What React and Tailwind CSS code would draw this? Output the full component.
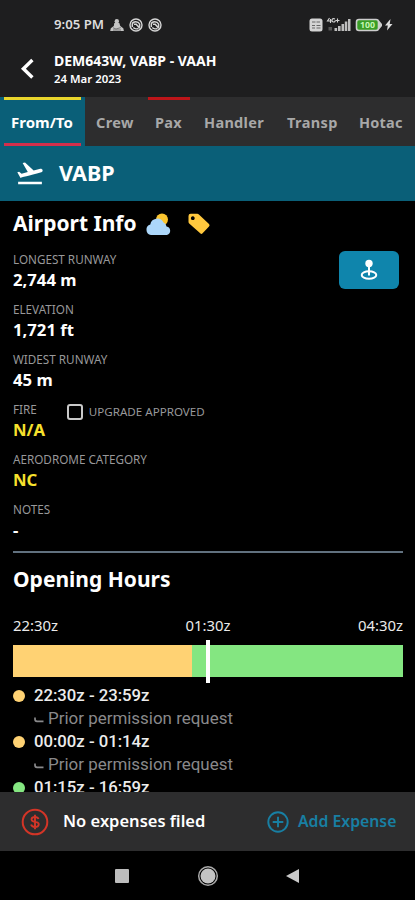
import { MdFlightTakeoff } from "react-icons/md";

const fields = [
  { label: "LONGEST RUNWAY", value: "2,744 m" },
  { label: "ELEVATION", value: "1,721 ft" },
  { label: "WIDEST RUNWAY", value: "45 m" },
];

function Field({ label, value, yellow, children }) {
  return (
    <div className="h-[50px]">
      <div className="flex h-[18px] items-center">
        <span className="whitespace-nowrap text-[11.700px] leading-[18px] text-[#98989a]">{label}</span>
        {children}
      </div>
      <div className={`text-[16.700px] font-bold leading-[23px] ${yellow ? "text-[#f7e12d]" : "text-white"}`}>{value}</div>
    </div>
  );
}

function SpiralIcon() {
  return (
    <svg width="14" height="14" viewBox="0 0 14 14" fill="none" stroke="#d6d6d6">
      <circle cx="7" cy="7" r="6" strokeWidth="1.4" />
      <path d="M3.300 9V6C4 3.300 9 3 10.600 6v3M5 6.200h2.200L10.800 10.300M4.300 9.600C5.800 11.200 8.400 11 9.400 10.400" strokeWidth="1.500" />
    </svg>
  );
}

function StatusBar() {
  return (
    <div className="flex h-[49px] items-center pl-[54px] text-[#dcdcdc]">
      <span className="w-[50px] whitespace-nowrap text-[13.200px] font-semibold">9:05 PM</span>
      <svg className="ml-[6px]" width="14" height="14" viewBox="0 0 14 14" fill="#c4c4c4">
        <circle cx="6.8" cy="3.2" r="2.200" />
        <path d="M4.300 5h5l1 3 3 2.200.6 2.800H.2l.6-2.800 3-2.200z" />
        <path d="M3 9.800l3 1.200 4.800-1.400M3 12h8" stroke="#555" strokeWidth=".7" fill="none" />
      </svg>
      <span className="ml-[5px] flex gap-[5px]"><SpiralIcon /><SpiralIcon /></span>
      <svg className="ml-[147px]" width="86" height="18" viewBox="309 15.500 86 18">
        <rect x="309.500" y="18" width="13" height="13" rx="2.500" fill="#d4d4d4" />
        <path d="M312 21.500h3.500M316.500 21.500h3.500M312 25h3M316.500 25h4M312 27.500h3M316.500 27.500h4" stroke="#666" strokeWidth="1.100" />
        <path d="M329.500 17.500l-2 3h4M330.500 18.500v4M335 18.500c-2-1-3 0-3 1.500s2 2 3 1v-1M335.500 20h4M337.500 18v4" stroke="#d4d4d4" strokeWidth="1.100" fill="none" />
        <path d="M328.500 26.500h3.500v3.500h-3.500z" fill="#555" />
        <path d="M334.500 30.500v-3h2.600v3zM338 30.500v-5h2.600v5zM341.500 30.500v-7h2.600v7zM344.800 30.500v-9.500h2.500v9.500zM348 30.500v-12h2.500v12z" fill="#bebebe" />
        <rect x="356.500" y="19" width="22" height="11" rx="2.500" fill="#399d26" stroke="#cdcdcd" strokeWidth="1.600" />
        <path d="M379 20l3 3.500v2l-3 3.500z" fill="#cdcdcd" />
        <text x="360" y="27.800" fontSize="9" fontWeight="700" fill="#c7f5b5" fontFamily="Noto Sans, sans-serif" textLength="15" lengthAdjust="spacingAndGlyphs">100</text>
        <path d="M390.500 18.500l-5.500 6.500h2.800l-.8 5 5.500-6.500h-2.800z" fill="#dedede" />
      </svg>
    </div>
  );
}

function Tab({ children, className }) {
  return <div className={`h-full shrink-0 whitespace-nowrap leading-[50px] ${className}`}>{children}</div>;
}

function Hours({ time, color, note }) {
  return (
    <>
      <div className="flex h-[23px] items-center">
        <span className={`size-3 rounded-full ${color}`} />
        <span className="ml-[9px] whitespace-nowrap text-[16.700px] font-medium leading-[23px] text-[#ececec]">{time}</span>
      </div>
      {note && (
        <div className="flex h-[23px] items-center pl-[21px] text-[#89898b]">
          <svg className="mt-[3px]" width="10" height="8" viewBox="0 0 10 8" fill="none" stroke="currentColor" strokeWidth="1.700"><path d="M1 1.500v1.800q0 2 2 2h6.500" /></svg>
          <span className="ml-1 whitespace-nowrap text-[16.950px] leading-[23px]">{note}</span>
        </div>
      )}
    </>
  );
}

export default function App() {
  return (
    <div className="flex h-[900px] w-[415px] flex-col overflow-hidden bg-black font-['Noto_Sans','Open_Sans',sans-serif] text-white">
      <header className="h-[97px] shrink-0 bg-[#1e1e1f]">
        <StatusBar />
        <div className="flex">
          <svg className="ml-5 mt-[9px] shrink-0" width="15" height="22" viewBox="0 0 15 22" fill="none" stroke="white" strokeWidth="3.400"><path d="M12.400 2L3.400 10.700l9 8.800" /></svg>
          <div className="ml-[19px] whitespace-nowrap">
            <div className="h-[22px] text-[14px] font-bold leading-[24px]">DEM643W, VABP - VAAH</div>
            <div className="text-[11.400px] font-semibold leading-[15px]">24 Mar 2023</div>
          </div>
        </div>
      </header>

      <nav className="flex h-[49px] shrink-0 overflow-hidden bg-[#2d2d2e] text-[14.500px] font-bold text-[#a8a8a8]">
        <div className="h-full w-[85px] bg-[#0a5f78] px-1">
          <div className="h-full w-[77px] border-b-[3px] border-t-[3px] border-b-[#d42f4c] border-t-[#e9d52c] pl-[7px] text-[15px] leading-[44px] text-white">From/To</div>
        </div>
        <Tab className="w-[63px] pl-[11px] tracking-[0.400px]">Crew</Tab>
        <Tab className="w-[42px] border-t-[3px] border-[#bd1519] pl-[7px] !leading-[44px] tracking-[0.300px]">Pax</Tab>
        <Tab className="w-[97px] pl-[14px] tracking-[0.300px]">Handler</Tab>
        <Tab className="w-[72px] tracking-[0.400px]">Transp</Tab>
        <Tab className="w-[55px] tracking-[0.200px]">Hotac</Tab>
      </nav>

      <div className="flex h-[55px] shrink-0 items-center bg-[#0a5f78] pb-px pl-[15px]">
        <MdFlightTakeoff size={30} />
        <span className="ml-[14px] text-[21.500px] font-bold">VABP</span>
      </div>

      <main className="h-[591px] shrink-0 overflow-hidden pl-[13px] pr-3">
        <div className="flex h-[48px] items-center pb-[2px]">
          <h1 className="w-[132px] whitespace-nowrap text-[21px] font-bold">Airport Info</h1>
          <svg width="28" height="26" viewBox="0 0 28 26">
            <circle cx="17" cy="8.500" r="6" fill="#fbc52f" />
            <path d="M6 24a5.400 5.400 0 0 1-.7-10.500A7 7 0 0 1 18.500 11.500a5 5 0 0 1 3 4.100A4.300 4.300 0 0 1 22 24z" fill="#acd7fa" />
          </svg>
          <svg className="ml-[14px]" width="24" height="24" viewBox="0 0 24 24">
            <path fillRule="evenodd" d="M1.500 4q0-2.200 2.200-2.200h6.600q.9 0 1.600.7L22 12q1.200 1.200 0 2.400l-6.400 6.900q-1.200 1.200-2.400 0L2.200 11.500Q1.500 10.800 1.500 10zM5.800 4.300a1.900 1.900 0 1 0 .01 0z" fill="#ffc83e" />
          </svg>
        </div>
        <div className="flex justify-between">
          <div className="mt-px">{fields.map((f) => <Field key={f.label} {...f} />)}</div>
          <button className="mr-1 mt-[2px] flex h-[38px] w-[60px] items-center justify-center rounded-[6px] bg-[#0f85ac]">
            <svg width="20" height="24" viewBox="0 0 20 24">
              <ellipse cx="10" cy="17" rx="7.300" ry="3.700" fill="none" stroke="white" strokeWidth="2" />
              <path d="M10 6v11.500" stroke="white" strokeWidth="2" />
              <circle cx="10" cy="5.500" r="3.700" fill="white" />
            </svg>
          </button>
        </div>
        <Field label="FIRE" value="N/A" yellow>
          <span className="ml-[30px] mt-[5px] size-4 shrink-0 rounded-[3px] border-2 border-[#c9c9c9]" />
          <span className="ml-[6px] mt-[5px] whitespace-nowrap text-[11.600px] leading-[18px] text-[#98989a]">UPGRADE APPROVED</span>
        </Field>
        <Field label="AERODROME CATEGORY" value="NC" yellow />
        <Field label="NOTES" value="-" />

        <section className="mt-px border-t-2 border-[#61717f]">
          <h2 className="mt-[11px] whitespace-nowrap text-[21px] font-bold leading-[30px]">Opening Hours</h2>
          <div className="mt-[19px] flex h-6 items-center justify-between text-[14.900px] text-[#eaeaea]">
            <span>22:30z</span><span>01:30z</span><span>04:30z</span>
          </div>
          <div className="relative mt-[8px] flex h-[32px] w-[390px]">
            <div className="w-[179px] bg-[#ffd273]" />
            <div className="flex-1 bg-[#84e681]" />
            <div className="absolute left-[193px] top-[-5px] h-[43px] w-[4px] bg-white" />
          </div>
          <div className="mt-[7px] font-[Roboto,sans-serif]">
            <Hours time="22:30z - 23:59z" color="bg-[#ffd273]" note="Prior permission request" />
            <Hours time="00:00z - 01:14z" color="bg-[#ffd273]" note="Prior permission request" />
            <Hours time="01:15z - 16:59z" color="bg-[#84e681]" />
          </div>
        </section>
      </main>

      <footer className="flex h-[59px] shrink-0 items-center bg-[#2d2d2e] pl-[21px]">
        <svg width="28" height="28" viewBox="0 0 28 28" fill="none" stroke="#d33527">
          <circle cx="14" cy="14" r="12.300" strokeWidth="2" />
          <path d="M17.500 11c-.5-1.300-1.600-2-3.500-2-4.200 0-4.600 3.900-1.100 4.500l2.400.6c3.700.8 3.100 4.900-1.300 4.900-2.200 0-3.500-.8-3.900-2.400M14 6.800v14.400" strokeWidth="1.900" />
        </svg>
        <span className="ml-[14px] w-[204px] whitespace-nowrap text-[16.500px] font-semibold">No expenses filed</span>
        <svg width="22" height="22" viewBox="0 0 22 22" fill="none" stroke="#187fa3" strokeWidth="1.900">
          <circle cx="11" cy="11" r="9.700" /><path d="M5.700 11h10.600M11 5.700v10.600" />
        </svg>
        <span className="ml-[9px] whitespace-nowrap text-[15.800px] font-semibold text-[#187fa3]">Add Expense</span>
      </footer>

      <div className="flex h-[49px] shrink-0 items-center pl-[115px]">
        <div className="size-[14px] rounded-[1px] bg-[#bdbdbd]" />
        <svg className="ml-[68px]" width="22" height="22" viewBox="0 0 22 22"><circle cx="11" cy="11" r="9.300" fill="none" stroke="#aaa" strokeWidth="1.500" /><circle cx="11" cy="11" r="7.500" fill="#c4c4c4" /></svg>
        <svg className="ml-[67px]" width="14" height="16" viewBox="0 0 14 16"><path d="M0 8L13 1v14z" fill="#c9c9c9" /></svg>
      </div>
    </div>
  );
}
